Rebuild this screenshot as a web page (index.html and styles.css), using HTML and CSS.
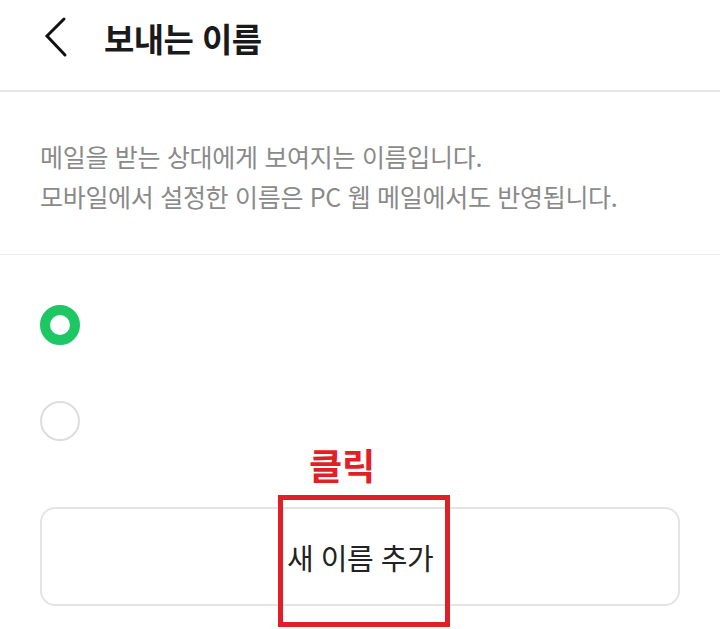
FILE: index.html
```html
<!DOCTYPE html>
<html lang="ko">
<head>
<meta charset="utf-8">
<title>보내는 이름</title>
<link rel="stylesheet" href="styles.css">
</head>
<body>
<div class="page">
  <header class="header">
    <button class="back" aria-label="뒤로">
      <svg width="30" height="44" viewBox="0 0 30 44"><polyline points="20,3 3,20 21,39" fill="none" stroke="#111" stroke-width="3" stroke-linecap="round" stroke-linejoin="miter"/></svg>
    </button>
    <h1 class="title">보내는 이름</h1>
  </header>
  <section class="desc">
    <p>메일을 받는 상대에게 보여지는 이름입니다.</p>
    <p>모바일에서 설정한 이름은 PC 웹 메일에서도 반영됩니다.</p>
  </section>
  <section class="options">
    <div class="row"><span class="radio checked"></span></div>
    <div class="row"><span class="radio"></span></div>
    <button class="add">새 이름 추가</button>
  </section>
  <div class="note">클릭</div>
  <div class="highlight"></div>
</div>
</body>
</html>
```
FILE: styles.css
```css
html, body {
  margin: 0;
  padding: 0;
  background: #fff;
}
body {
  font-family: "Noto Sans CJK KR", "Noto Sans", sans-serif;
  color: #222;
}
.page {
  position: relative;
  width: 720px;
  height: 629px;
  overflow: hidden;
}
.header {
  display: flex;
  align-items: center;
  height: 76px;
  padding-bottom: 14px;
  border-bottom: 2px solid #e6e6e6;
}
.back {
  margin-left: 44px;
  width: 30px;
  height: 44px;
  padding: 0;
  border: 0;
  background: none;
  display: flex;
}
.title {
  margin: 0 0 0 30px;
  font-size: 33px;
  font-weight: 700;
  letter-spacing: -0.6px;
  color: #1a1a1a;
  line-height: 1;
}
.desc {
  padding: 44px 40px 38px;
  border-bottom: 1px solid #eeeeee;
}
.desc p {
  margin: 0;
  font-size: 25px;
  line-height: 40px;
  letter-spacing: -0.3px;
  color: #8a8a8a;
}
.options {
  padding: 22px 40px 0;
}
.row {
  height: 96px;
  display: flex;
  align-items: center;
}
.radio {
  box-sizing: border-box;
  width: 40px;
  height: 40px;
  border-radius: 50%;
  border: 2px solid #dddddd;
}
.radio.checked {
  border: 10px solid #1cc764;
}
.add {
  box-sizing: border-box;
  display: block;
  width: 640px;
  height: 99px;
  margin-top: 38px;
  border: 2px solid #e4e4e4;
  border-radius: 15px;
  background: #fff;
  font-family: inherit;
  font-size: 29px;
  letter-spacing: -0.5px;
  color: #222;
}
.note {
  position: absolute;
  left: 309px;
  top: 440px;
  font-size: 36px;
  font-weight: 700;
  color: #e21f26;
  letter-spacing: 0;
  line-height: 48px;
}
.highlight {
  position: absolute;
  left: 278px;
  top: 495px;
  width: 172px;
  height: 132px;
  box-sizing: border-box;
  border: 5px solid #e21f26;
}
```
